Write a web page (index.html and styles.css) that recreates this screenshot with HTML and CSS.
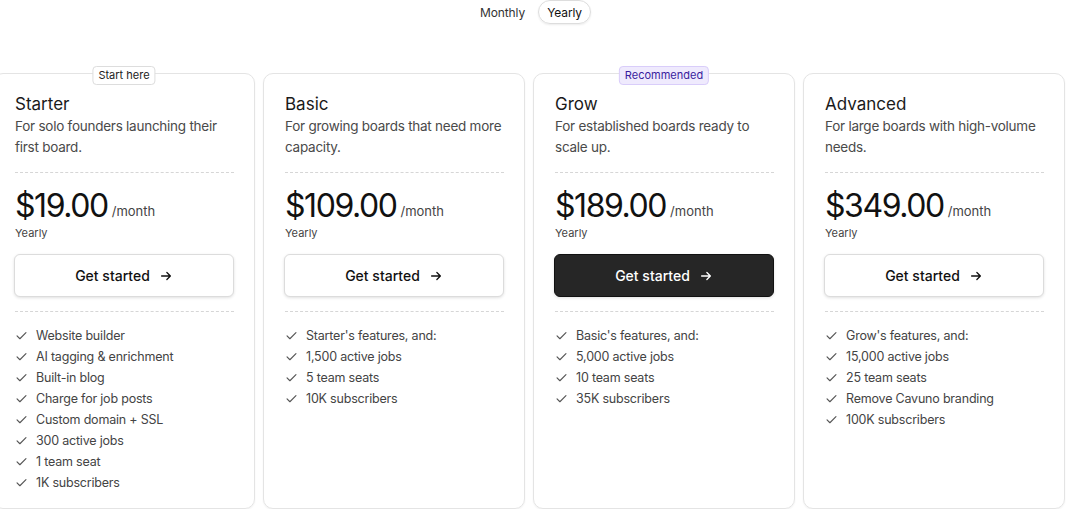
FILE: index.html
```html
<!DOCTYPE html>
<html lang="en">
<head>
<meta charset="UTF-8">
<meta name="viewport" content="width=device-width, initial-scale=1.0">
<title>Pricing</title>
<link rel="stylesheet" href="styles.css">
</head>
<body>

<div class="billing-toggle">
  <button class="toggle-option">Monthly</button>
  <button class="toggle-option active">Yearly</button>
</div>

<div class="plans">

  <div class="plan">
    <span class="badge">Start here</span>
    <div class="plan-name">Starter</div>
    <div class="plan-desc">For solo founders launching their first board.</div>
    <div class="divider"></div>
    <div class="price"><span class="amount">$19.00</span><span class="period">/month</span></div>
    <div class="billed">Yearly</div>
    <button class="cta">Get started
      <svg viewBox="0 0 16 16" width="14" height="14"><path d="M3 8h10M9 4l4 4-4 4"/></svg>
    </button>
    <div class="divider"></div>
    <ul class="features">
      <li><svg viewBox="0 0 16 16" width="13" height="13"><path d="M2.5 8.5l3.5 3.5 7.5-7.5"/></svg>Website builder</li>
      <li><svg viewBox="0 0 16 16" width="13" height="13"><path d="M2.5 8.5l3.5 3.5 7.5-7.5"/></svg>AI tagging &amp; enrichment</li>
      <li><svg viewBox="0 0 16 16" width="13" height="13"><path d="M2.5 8.5l3.5 3.5 7.5-7.5"/></svg>Built-in blog</li>
      <li><svg viewBox="0 0 16 16" width="13" height="13"><path d="M2.5 8.5l3.5 3.5 7.5-7.5"/></svg>Charge for job posts</li>
      <li><svg viewBox="0 0 16 16" width="13" height="13"><path d="M2.5 8.5l3.5 3.5 7.5-7.5"/></svg>Custom domain + SSL</li>
      <li><svg viewBox="0 0 16 16" width="13" height="13"><path d="M2.5 8.5l3.5 3.5 7.5-7.5"/></svg>300 active jobs</li>
      <li><svg viewBox="0 0 16 16" width="13" height="13"><path d="M2.5 8.5l3.5 3.5 7.5-7.5"/></svg>1 team seat</li>
      <li><svg viewBox="0 0 16 16" width="13" height="13"><path d="M2.5 8.5l3.5 3.5 7.5-7.5"/></svg>1K subscribers</li>
    </ul>
  </div>

  <div class="plan">
    <div class="plan-name">Basic</div>
    <div class="plan-desc">For growing boards that need more capacity.</div>
    <div class="divider"></div>
    <div class="price"><span class="amount">$109.00</span><span class="period">/month</span></div>
    <div class="billed">Yearly</div>
    <button class="cta">Get started
      <svg viewBox="0 0 16 16" width="14" height="14"><path d="M3 8h10M9 4l4 4-4 4"/></svg>
    </button>
    <div class="divider"></div>
    <ul class="features">
      <li><svg viewBox="0 0 16 16" width="13" height="13"><path d="M2.5 8.5l3.5 3.5 7.5-7.5"/></svg>Starter's features, and:</li>
      <li><svg viewBox="0 0 16 16" width="13" height="13"><path d="M2.5 8.5l3.5 3.5 7.5-7.5"/></svg>1,500 active jobs</li>
      <li><svg viewBox="0 0 16 16" width="13" height="13"><path d="M2.5 8.5l3.5 3.5 7.5-7.5"/></svg>5 team seats</li>
      <li><svg viewBox="0 0 16 16" width="13" height="13"><path d="M2.5 8.5l3.5 3.5 7.5-7.5"/></svg>10K subscribers</li>
    </ul>
  </div>

  <div class="plan">
    <span class="badge recommended">Recommended</span>
    <div class="plan-name">Grow</div>
    <div class="plan-desc">For established boards ready to scale up.</div>
    <div class="divider"></div>
    <div class="price"><span class="amount">$189.00</span><span class="period">/month</span></div>
    <div class="billed">Yearly</div>
    <button class="cta primary">Get started
      <svg viewBox="0 0 16 16" width="14" height="14"><path d="M3 8h10M9 4l4 4-4 4"/></svg>
    </button>
    <div class="divider"></div>
    <ul class="features">
      <li><svg viewBox="0 0 16 16" width="13" height="13"><path d="M2.5 8.5l3.5 3.5 7.5-7.5"/></svg>Basic's features, and:</li>
      <li><svg viewBox="0 0 16 16" width="13" height="13"><path d="M2.5 8.5l3.5 3.5 7.5-7.5"/></svg>5,000 active jobs</li>
      <li><svg viewBox="0 0 16 16" width="13" height="13"><path d="M2.5 8.5l3.5 3.5 7.5-7.5"/></svg>10 team seats</li>
      <li><svg viewBox="0 0 16 16" width="13" height="13"><path d="M2.5 8.5l3.5 3.5 7.5-7.5"/></svg>35K subscribers</li>
    </ul>
  </div>

  <div class="plan">
    <div class="plan-name">Advanced</div>
    <div class="plan-desc">For large boards with high-volume needs.</div>
    <div class="divider"></div>
    <div class="price"><span class="amount">$349.00</span><span class="period">/month</span></div>
    <div class="billed">Yearly</div>
    <button class="cta">Get started
      <svg viewBox="0 0 16 16" width="14" height="14"><path d="M3 8h10M9 4l4 4-4 4"/></svg>
    </button>
    <div class="divider"></div>
    <ul class="features">
      <li><svg viewBox="0 0 16 16" width="13" height="13"><path d="M2.5 8.5l3.5 3.5 7.5-7.5"/></svg>Grow's features, and:</li>
      <li><svg viewBox="0 0 16 16" width="13" height="13"><path d="M2.5 8.5l3.5 3.5 7.5-7.5"/></svg>15,000 active jobs</li>
      <li><svg viewBox="0 0 16 16" width="13" height="13"><path d="M2.5 8.5l3.5 3.5 7.5-7.5"/></svg>25 team seats</li>
      <li><svg viewBox="0 0 16 16" width="13" height="13"><path d="M2.5 8.5l3.5 3.5 7.5-7.5"/></svg>Remove Cavuno branding</li>
      <li><svg viewBox="0 0 16 16" width="13" height="13"><path d="M2.5 8.5l3.5 3.5 7.5-7.5"/></svg>100K subscribers</li>
    </ul>
  </div>

</div>

</body>
</html>
```

FILE: styles.css
```css
body {
  font-family: Inter, 'Liberation Sans', sans-serif;
  background-color: #fff;
  color: #1a1a1a;
  margin: 0;
  overflow: hidden;
}
.billing-toggle {
  display: flex;
  justify-content: center;
  gap: 4px;
  padding-right: 8px;
  height: 24px;
}
.toggle-option {
  font-family: inherit;
  font-size: 12px;
  letter-spacing: -0.1px;
  color: #333;
  background: none;
  border: 1px solid transparent;
  border-radius: 999px;
  padding: 0 8px;
  cursor: pointer;
}
.toggle-option.active {
  color: #111;
  border-color: #ddd;
  box-shadow: 0 1px 2px rgba(0, 0, 0, 0.08);
}
.plans {
  display: grid;
  grid-template-columns: repeat(4, 262px);
  gap: 8px;
  margin: 49px 0 0 -7px;
}
.plan {
  position: relative;
  border: 1px solid #e4e4e4;
  border-radius: 10px;
  padding: 19px 20px 16px 21px;
  box-shadow: 0 1px 2px rgba(0, 0, 0, 0.06);
  height: 436px;
  box-sizing: border-box;
}
.badge {
  position: absolute;
  top: -8px;
  left: 50%;
  transform: translateX(-50%);
  font-size: 11px;
  line-height: 17px;
  padding: 0 5px;
  color: #222;
  background: #fff;
  border: 1px solid #ddd;
  border-radius: 4px;
  white-space: nowrap;
}
.badge.recommended {
  color: #3a1d9e;
  background: #efeafd;
  border-color: #d9cdfa;
}
.plan-name {
  font-size: 17px;
  line-height: 22px;
  color: #1a1a1a;
}
.plan-desc {
  font-size: 13.5px;
  letter-spacing: -0.25px;
  line-height: 21px;
  color: #4a4a4a;
  margin-top: 1px;
}
.divider {
  border-top: 1px dashed #d6d6d6;
  margin-top: 14px;
}
.price {
  margin-top: 15px;
  display: flex;
  align-items: baseline;
  gap: 4px;
}
.amount {
  font-size: 32px;
  line-height: 36px;
  letter-spacing: -0.045em;
  color: #111;
}
.period {
  font-size: 13px;
  color: #444;
  position: relative;
  top: -1px;
}
.billed {
  font-size: 11px;
  line-height: 16px;
  color: #444;
  margin-top: 1px;
}
.cta {
  display: flex;
  align-items: center;
  justify-content: center;
  gap: 9px;
  width: calc(100% + 1px);
  height: 43px;
  margin: 13px 0 0 -1px;
  font-family: inherit;
  font-size: 14px;
  font-weight: 500;
  color: #111;
  background: #fff;
  border: 1px solid #dcdcdc;
  border-radius: 6px;
  box-shadow: 0 1px 3px rgba(0, 0, 0, 0.12);
  cursor: pointer;
}
.cta svg {
  fill: none;
  stroke: currentColor;
  stroke-width: 1.5;
  stroke-linecap: round;
  stroke-linejoin: round;
}
.cta.primary {
  color: #fff;
  background: #262626;
  border-color: #111;
}
.features {
  list-style: none;
  margin: 13px 0 0;
  padding: 0;
}
.features li {
  display: flex;
  align-items: center;
  gap: 8px;
  font-size: 12.5px;
  letter-spacing: -0.2px;
  line-height: 21px;
  color: #444;
}
.features svg {
  flex: none;
  fill: none;
  stroke: #555;
  stroke-width: 1.4;
  stroke-linecap: round;
  stroke-linejoin: round;
}
```
